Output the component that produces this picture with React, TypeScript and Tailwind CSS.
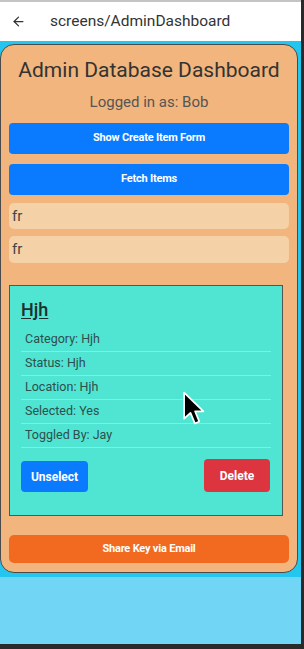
import { ArrowLeft } from 'lucide-react';

const details = [
  ['Category', 'Hjh'],
  ['Status', 'Hjh'],
  ['Location', 'Hjh'],
  ['Selected', 'Yes'],
  ['Toggled By', 'Jay'],
];

function Cursor() {
  return (
    <svg className="absolute left-[182px] top-[391px]" width="28" height="38" viewBox="0 0 17 24">
      <path
        d="M1 1 L1 17.5 L5 13.8 L7.8 20.5 L10.6 19.3 L7.9 12.8 L13.2 12.8 Z"
        fill="#000"
        stroke="#fff"
        strokeWidth="1.1"
        strokeLinejoin="round"
      />
    </svg>
  );
}

export default function App() {
  return (
    <div className="relative flex h-[649px] w-[304px] flex-col border-r-[3px] border-b-[5px] border-[#2a2a2a] bg-[#71d6f6] font-['Roboto',sans-serif]">
      <header className="flex h-[41px] shrink-0 items-center border-t-2 border-[#c4c4c4] bg-white">
        <ArrowLeft className="ml-[11px] h-[15px] w-[15px] text-[#333]" strokeWidth={2} />
        <span className="ml-[24px] text-[15.5px] text-[#333]">screens/AdminDashboard</span>
      </header>

      <div className="bg-[#22c6ee] pt-[3px] pr-[3px] pb-[4px]">
        <div className="flex flex-col rounded-[14px] border border-[#4a4a4a] bg-[#f1b57d] px-[8px] pt-[11px] pb-[9px]">
          <h1 className="text-center text-[21px] leading-[28px] text-[#333]">Admin Database Dashboard</h1>
          <p className="mt-[8px] text-center text-[15px] leading-[20px] text-[#555]">Logged in as: Bob</p>

          <button className="mt-[11px] h-[31px] rounded-[4px] bg-[#0a7bff] text-[11px] font-bold tracking-[-0.2px] text-white">
            Show Create Item Form
          </button>
          <button className="mt-[10px] h-[31px] rounded-[4px] bg-[#0a7bff] text-[11px] font-bold tracking-[-0.2px] text-white">
            Fetch Items
          </button>

          <div className="mt-[8px] flex h-[26px] items-center rounded-[5px] bg-[#f5d1a8] pl-[3px] text-[15px] text-[#444]">fr</div>
          <div className="mt-[7px] flex h-[27px] items-center rounded-[5px] bg-[#f5d1a8] pl-[3px] text-[15px] text-[#444]">fr</div>

          <div className="mt-[22px] mr-[6px] border border-[#555] bg-[#50e4d3] px-[11px] pt-[12px] pb-[23px]">
            <h2 className="text-[18px] leading-[24px] font-medium text-[#1f2f2d] underline underline-offset-2">Hjh</h2>
            <div className="mt-[6px]">
              {details.map(([k, v]) => (
                <div key={k} className="flex h-[24px] items-center border-b border-[#8ee9dd] pl-[4px] text-[12.5px] text-[#2e4f4b]">
                  {k}: {v}
                </div>
              ))}
            </div>
            <div className="mt-[11px] flex items-start justify-between pr-[1px]">
              <button className="mt-[2px] h-[31px] w-[67px] rounded-[4px] bg-[#0a7bff] text-[12px] font-bold text-white">Unselect</button>
              <button className="h-[33px] w-[66px] rounded-[4px] bg-[#dc3540] text-[12px] font-bold text-white">Delete</button>
            </div>
          </div>

          <button className="mt-[19px] h-[28px] rounded-[5px] bg-[#f26a1f] text-[11px] font-bold tracking-[-0.2px] text-white">
            Share Key via Email
          </button>
        </div>
      </div>

      <Cursor />
    </div>
  );
}
